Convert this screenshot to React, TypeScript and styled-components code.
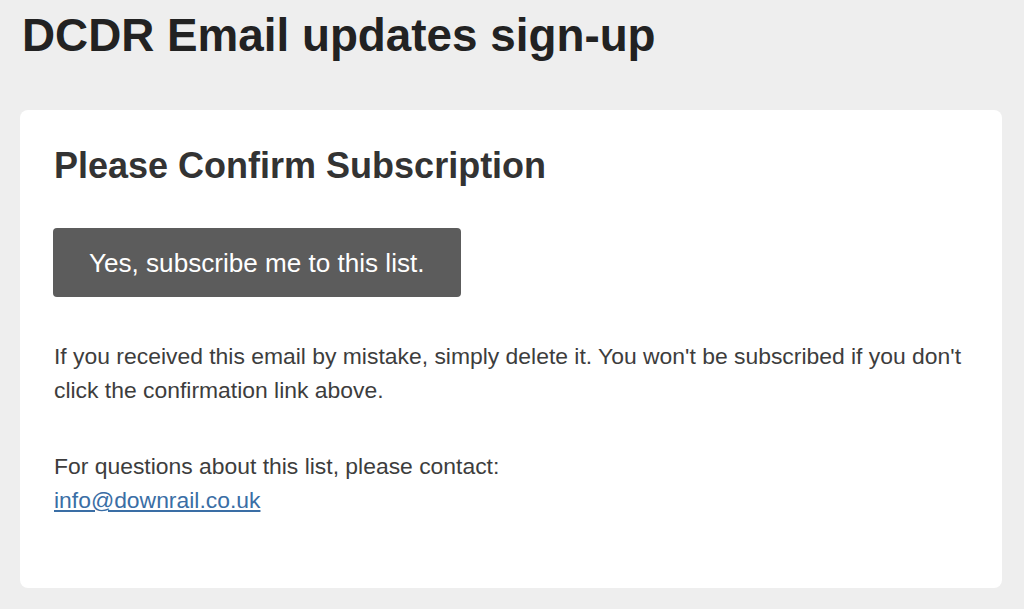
import React from "react";
import styled, { createGlobalStyle } from "styled-components";

const Global = createGlobalStyle`
  html, body {
    margin: 0;
    padding: 0;
    background: #eeeeee;
    font-family: "Liberation Sans", Arial, sans-serif;
  }
  * { box-sizing: border-box; }
`;

const Page = styled.div`
  display: flex;
  flex-direction: column;
  padding: 9px 22px 21px 20px;
  min-height: 609px;
`;

const Title = styled.h1`
  margin: 0 0 47px 0;
  padding-left: 2px;
  font-size: 45.8px;
  line-height: 54px;
  font-weight: 700;
  color: #222222;
`;

const Card = styled.div`
  background: #ffffff;
  border-radius: 8px;
  padding: 35px 33px 29px 33px;
  display: flex;
  flex-direction: column;
  align-items: flex-start;
`;

const Heading = styled.h2`
  margin: 0 0 41px 0;
  padding-left: 1px;
  font-size: 36px;
  line-height: 42px;
  font-weight: 700;
  color: #333333;
`;

const Button = styled.button`
  margin: 0 0 42px 0;
  padding: 20px 36px 19px 36px;
  background: #5c5c5c;
  color: #ffffff;
  border: none;
  border-radius: 4px;
  font-family: "Liberation Sans", Arial, sans-serif;
  font-size: 26.1px;
  line-height: 30px;
  cursor: pointer;
`;

const Para = styled.p`
  margin: 0 0 42px 0;
  padding-left: 1px;
  font-size: 22.9px;
  line-height: 34px;
  color: #3d3d3d;
`;

const Link = styled.a`
  color: #3a6ea5;
  text-decoration: underline;
`;

export default function App() {
  return (
    <>
      <Global />
      <Page>
        <Title>DCDR Email updates sign-up</Title>
        <Card>
          <Heading>Please Confirm Subscription</Heading>
          <Button>Yes, subscribe me to this list.</Button>
          <Para>
            If you received this email by mistake, simply delete it. You won't be subscribed if you don't
            click the confirmation link above.
          </Para>
          <Para>
            For questions about this list, please contact:
            <br />
            <Link href="#">info@downrail.co.uk</Link>
          </Para>
        </Card>
      </Page>
    </>
  );
}
